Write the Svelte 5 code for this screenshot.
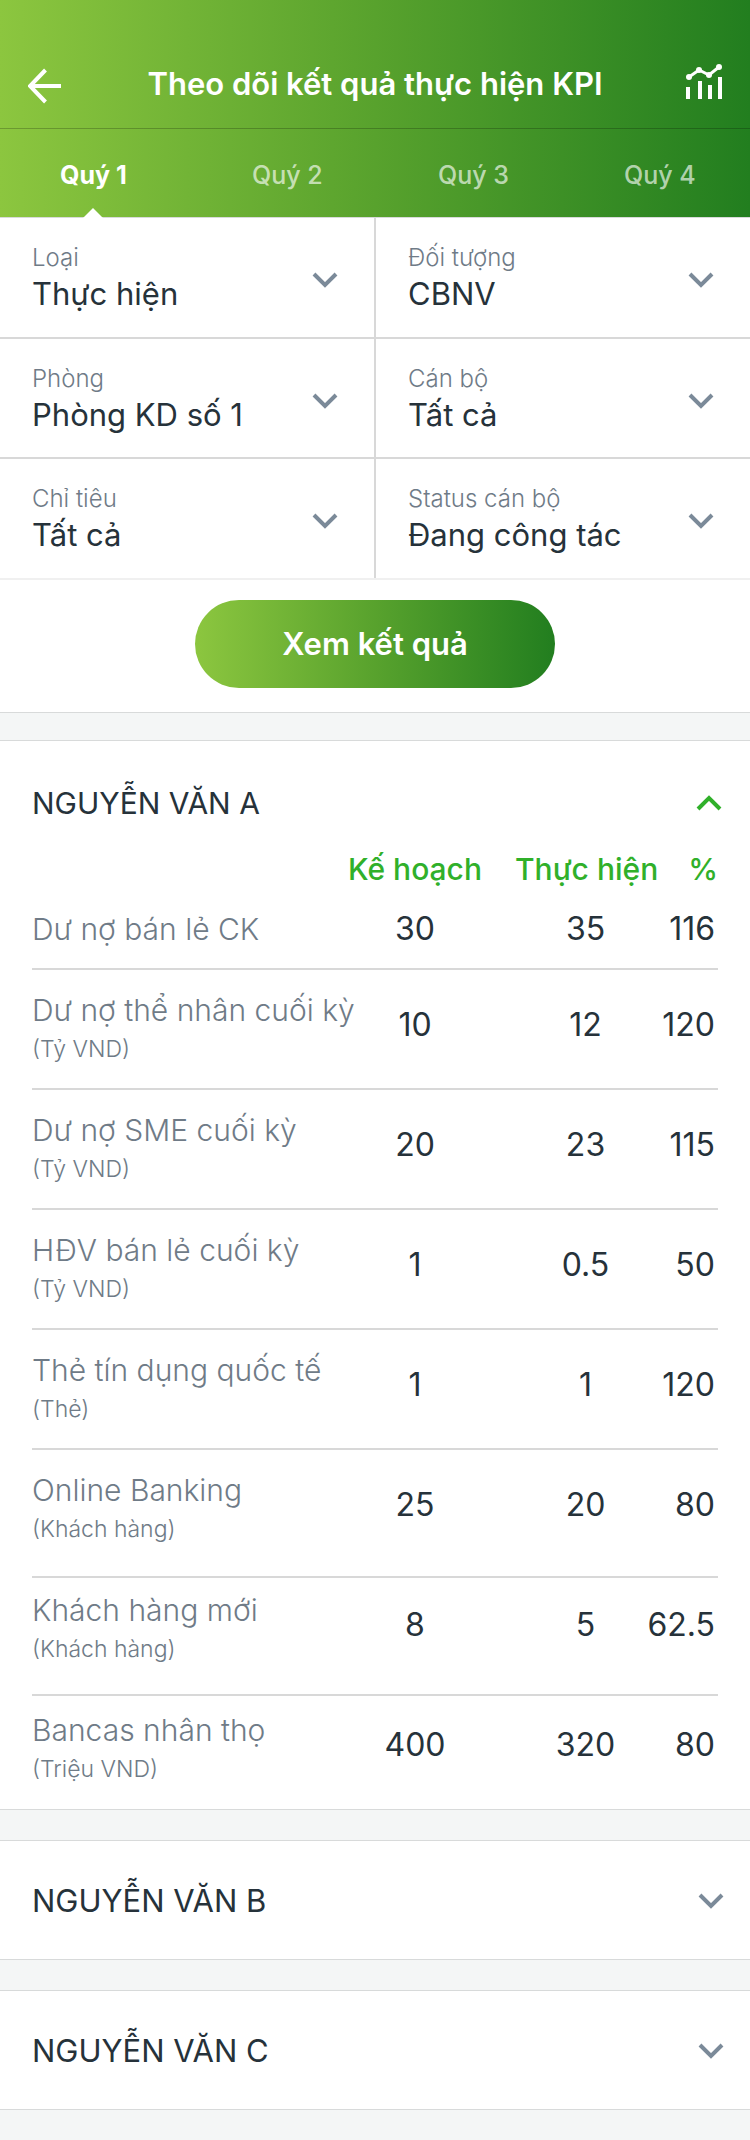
<script>
  const quarters = ['Quý 1', 'Quý 2', 'Quý 3', 'Quý 4'];
  let activeQuarter = $state(0);

  const filters = [
    { id: 'type', label: 'Loại', value: 'Thực hiện' },
    { id: 'target', label: 'Đối tượng', value: 'CBNV' },
    { id: 'department', label: 'Phòng', value: 'Phòng KD số 1' },
    { id: 'officer', label: 'Cán bộ', value: 'Tất cả' },
    { id: 'criteria', label: 'Chỉ tiêu', value: 'Tất cả' },
    { id: 'status', label: 'Status cán bộ', value: 'Đang công tác' }
  ];

  const rows = [
    { name: 'Dư nợ bán lẻ CK', plan: '30', actual: '35', percent: '116', kind: 'single' },
    { name: 'Dư nợ thể nhân cuối kỳ', unit: '(Tỷ VND)', plan: '10', actual: '12', percent: '120' },
    { name: 'Dư nợ SME cuối kỳ', unit: '(Tỷ VND)', plan: '20', actual: '23', percent: '115' },
    { name: 'HĐV bán lẻ cuối kỳ', unit: '(Tỷ VND)', plan: '1', actual: '0.5', percent: '50' },
    { name: 'Thẻ tín dụng quốc tế', unit: '(Thẻ)', plan: '1', actual: '1', percent: '120' },
    { name: 'Online Banking', unit: '(Khách hàng)', plan: '25', actual: '20', percent: '80', kind: 'roomy' },
    { name: 'Khách hàng mới', unit: '(Khách hàng)', plan: '8', actual: '5', percent: '62.5', kind: 'snug' },
    { name: 'Bancas nhân thọ', unit: '(Triệu VND)', plan: '400', actual: '320', percent: '80', kind: 'snug' }
  ];

  let open = $state(true);
</script>

{#snippet chevron(up)}
  <svg class="chevron" class:up viewBox="0 0 26 16" width="26" height="16" aria-hidden="true">
    <path d="M2 2 L13 13 L24 2" fill="none" stroke="currentColor" stroke-width="4" />
  </svg>
{/snippet}

<header>
  <div class="bar">
    <button class="icon" aria-label="Quay lại">
      <svg viewBox="0 0 36 40" width="36" height="40" aria-hidden="true">
        <path d="M33 22 H3 M17.500 6 L2 22 L17.500 38" fill="none" stroke="#fff" stroke-width="4" />
      </svg>
    </button>
    <h1>Theo dõi kết quả thực hiện KPI</h1>
    <button class="icon" aria-label="Biểu đồ">
      <svg viewBox="0 0 36 40" width="36" height="40" fill="#fff" aria-hidden="true">
        <path d="M0 23h4v12H0zM12 17h4v18h-4zM22 21h4v14h-4zM32 13h4v22h-4z" />
        <path d="M3 13 L13 6 L23 11 L33 3" fill="none" stroke="#fff" stroke-width="3" />
        <circle cx="3" cy="13" r="3" />
        <circle cx="13" cy="6" r="3" />
        <circle cx="23" cy="11" r="3" />
        <circle cx="33" cy="3" r="3" />
      </svg>
    </button>
  </div>
  <nav>
    {#each quarters as quarter, i}
      <button class="tab" class:active={i === activeQuarter} onclick={() => (activeQuarter = i)}>
        {quarter}
      </button>
    {/each}
  </nav>
</header>

<main>
  <form onsubmit={(e) => e.preventDefault()}>
    <div class="filters">
      {#each filters as filter}
        <div class="filter">
          <label for={filter.id}>{filter.label}</label>
          <select id={filter.id}>
            <option>{filter.value}</option>
          </select>
          {@render chevron(false)}
        </div>
      {/each}
    </div>
    <button class="submit">Xem kết quả</button>
  </form>

  <section class="expanded">
    <button class="person" aria-expanded={open} onclick={() => (open = !open)}>
      NGUYỄN VĂN A
      {@render chevron(open)}
    </button>
    {#if open}
      <table>
        <colgroup>
          <col />
          <col class="plan" />
          <col class="actual" />
          <col class="percent" />
        </colgroup>
        <thead>
          <tr>
            <td></td>
            <th>Kế hoạch</th>
            <th class="start">Thực hiện</th>
            <th class="end">%</th>
          </tr>
        </thead>
        <tbody>
          {#each rows as row}
            <tr class={row.kind}>
              <th scope="row">
                {row.name}
                {#if row.unit}<small>{row.unit}</small>{/if}
              </th>
              <td>{row.plan}</td>
              <td class="mid">{row.actual}</td>
              <td class="last">{row.percent}</td>
            </tr>
          {/each}
        </tbody>
      </table>
    {/if}
  </section>

  {#each ['NGUYỄN VĂN B', 'NGUYỄN VĂN C'] as person}
    <section>
      <button class="person" aria-expanded="false">
        {person}
        {@render chevron(false)}
      </button>
    </section>
  {/each}
</main>

<style>
  :global(body) {
    background: #f4f6f6;
    color: #26323a;
    font: 400 32px/40px Inter, 'Noto Sans', sans-serif;
  }

  button,
  select {
    margin: 0;
    padding: 0;
    border: 0;
    background: none;
    color: inherit;
    font: inherit;
    cursor: pointer;
  }

  header {
    background: linear-gradient(90deg, #8cc63f, #58a22d 50%, #227e1f);
    color: #fff;
  }

  .bar {
    display: flex;
    align-items: center;
    justify-content: space-between;
    padding: 64px 28px 24px;
    border-bottom: 1px solid rgba(0, 0, 0, 0.22);
  }

  .icon {
    display: flex;
  }

  h1 {
    margin: 0;
    font-size: 31px;
    font-weight: 600;
    line-height: 40px;
    white-space: nowrap;
  }

  nav {
    display: grid;
    grid-template-columns: 192fr 186fr 186fr 126fr;
    padding-left: 60px;
  }

  .tab {
    position: relative;
    justify-self: start;
    height: 88px;
    padding-top: 4px;
    color: rgba(255, 255, 255, 0.65);
    font-size: 25px;
    font-weight: 500;
    line-height: 32px;
  }

  .tab.active {
    color: #fff;
    font-weight: 700;
  }

  .tab.active::after {
    content: '';
    position: absolute;
    bottom: -1px;
    left: 50%;
    margin-left: -10px;
    border: 10px solid transparent;
    border-top: 0;
    border-bottom-color: #fff;
  }

  form {
    display: flex;
    flex-direction: column;
    align-items: center;
    gap: 20px;
    padding-bottom: 24px;
    border-top: 1px solid #d8dada;
    border-bottom: 1px solid #d8dada;
    background: #fff;
  }

  .filters {
    display: grid;
    grid-template: 119px 118px 119px / 1fr 1fr;
    gap: 2px;
    align-self: stretch;
    border-bottom: 2px solid #f0f0f0;
    background: #d8d8d8;
  }

  .filter {
    display: grid;
    align-content: start;
    position: relative;
    padding: 24px 36px 0 32px;
    background: #fff;
  }

  .filter label {
    color: #6f7b87;
    font-size: 24px;
    font-weight: 300;
    line-height: 32px;
  }

  .filter select {
    width: 100%;
    height: 40px;
    appearance: none;
    font-size: 31px;
    line-height: 40px;
  }

  .filter .chevron {
    position: absolute;
    top: 54px;
    right: 36px;
    pointer-events: none;
  }

  .chevron {
    flex: none;
    color: #7b8a99;
  }

  .chevron.up {
    color: #30b02a;
    transform: rotate(180deg);
  }

  .submit {
    width: 360px;
    height: 88px;
    border-radius: 44px;
    background: linear-gradient(90deg, #8cc63f, #58a22d 50%, #227e1f);
    color: #fff;
    font-size: 31px;
    font-weight: 600;
  }

  section {
    margin-top: 30px;
    border: solid #d8dada;
    border-width: 1px 0;
    background: #fff;
  }

  section.expanded {
    margin-top: 27px;
    padding-bottom: 21px;
  }

  .person {
    display: flex;
    align-items: center;
    justify-content: space-between;
    width: 100%;
    padding: 40px 26px 38px 32px;
    font-size: 31px;
    text-align: left;
  }

  .expanded .person {
    padding: 42px 28px 25px 32px;
    font-size: 30px;
  }

  table {
    width: calc(100% - 64px);
    margin: 0 32px;
    border-collapse: collapse;
    table-layout: fixed;
  }

  .plan {
    width: 200px;
  }

  .actual {
    width: 131px;
  }

  .percent {
    width: 72px;
  }

  th,
  td {
    padding: 0;
    text-align: center;
    vertical-align: top;
    white-space: nowrap;
  }

  th {
    font-size: 30px;
  }

  thead th {
    padding-top: 1px;
    color: #30b02a;
    font-weight: 500;
  }

  thead .start {
    text-align: left;
  }

  thead .end {
    text-align: right;
  }

  tbody tr {
    --top: 20px;
    --bottom: 20px;
    --drop: 15px;
    border-bottom: 2px solid #d8d8d8;
  }

  tbody tr:last-child {
    border-bottom: 0;
  }

  tbody .single {
    --bottom: 19px;
    --drop: 0px;
  }

  tbody .roomy {
    --bottom: 28px;
  }

  tbody .snug {
    --top: 12px;
    --bottom: 26px;
  }

  tbody .snug:last-child {
    --top: 14px;
    --bottom: 0px;
  }

  tbody th {
    padding: var(--top) 0 var(--bottom);
    color: #6f7b87;
    font-weight: 300;
    text-align: left;
  }

  small {
    display: block;
    font-size: 23px;
    line-height: 38px;
  }

  tbody td {
    padding-top: calc(var(--top) + var(--drop));
  }

  tbody .mid {
    padding-left: 10px;
  }

  tbody .last {
    padding-right: 3px;
    text-align: right;
  }
</style>
